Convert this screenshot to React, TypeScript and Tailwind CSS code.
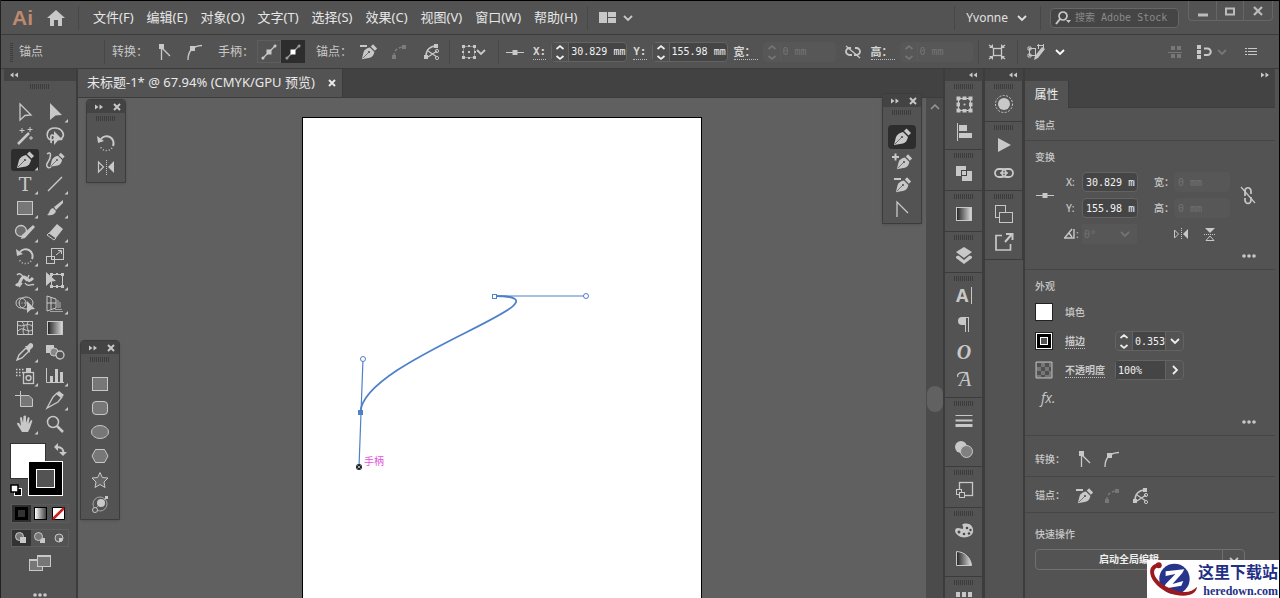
import type { ReactNode } from "react";
import clsx from "clsx";

const UI = "font-['Noto_Sans','Noto_Sans_CJK_SC',sans-serif]";
const MONO = "font-['DejaVu_Sans_Mono','Noto_Sans_CJK_SC',monospace]";

const line = { fill: "none", stroke: "currentColor" } as const;

/* ---------- icon drawings, all centred on 0,0 ---------- */

const nib = (
  <>
    <path d="M-8 8 L-6 0 Q-4 -4 1 -5 L6 0 Q5 5 1 6.500Z" fill="currentColor" />
    <path d="M2 -6 L4.500 -8.500 L9 -4 L6.500 -1.500Z" fill="currentColor" />
    <path d="M-7 7 L-0.500 0.500" stroke="#606060" strokeWidth="0.900" />
    <circle cx="0" cy="0" r="1.100" fill="#484848" />
  </>
);

const rotateArc = (
  <>
    <path d="M-5 -4 A7 7 0 0 1 7 3" {...line} strokeWidth="2" />
    <path d="M-9 -7 L-8 0 L-2 -2Z" fill="currentColor" />
    <path d="M6 5 A7 7 0 0 1 -6 3" {...line} strokeWidth="1.500" strokeDasharray="1 2" />
  </>
);

const icons = {
  direct: <path d="M-5 -8 L6 3 L0 3.500 L-5 8Z" {...line} strokeWidth="1.300" />,
  select: <path d="M-5 -9 L7 3 L0.500 3.500 L-5 8Z" fill="currentColor" />,
  wand: (
    <>
      <path d="M-7 8 L4 -3" {...line} strokeWidth="2.500" />
      <path d="M-3 -8v5 M-5.500 -5.500h5 M5 -9v5 M2.500 -6.500h5 M6 0v4 M4 2h4" {...line} />
    </>
  ),
  lasso: (
    <>
      <path d="M6 3 C11 -1 7 -8 0 -8 C-9 -8 -10 2 -4 4 C0 5 1 -1 -3 -1 C-6 0 -3 4 -4 7" {...line} strokeWidth="1.700" />
      <path d="M-1 -5 L8 4 L3 4.500 L-1 9Z" fill="currentColor" />
    </>
  ),
  pen: nib,
  curvature: (
    <>
      <path d="M-8 -6 C-3 -10 -4 -2 -7 2 C-10 6 -7 9 -4 7" {...line} strokeWidth="1.500" />
      <g transform="translate(2 0) scale(0.85)">{nib}</g>
    </>
  ),
  type: (
    <text x="0" y="7" textAnchor="middle" fill="currentColor" className="font-['DejaVu_Serif',serif] text-[19px] font-medium">
      T
    </text>
  ),
  line: <path d="M-7 7 L7 -7" {...line} strokeWidth="1.500" />,
  rect: <rect x="-7.500" y="-6.500" width="15" height="13" fill="#777" stroke="currentColor" />,
  brush: (
    <>
      <path d="M8 -8 L-1 -1 L1 2 L8 -5Z" fill="currentColor" />
      <path d="M-2 0 L1 3 C0 7 -4 8 -8 7 C-5 5 -6 1 -2 0Z" fill="currentColor" />
    </>
  ),
  shaper: (
    <>
      <circle cx="-4" cy="-1" r="5.500" fill="#6c6c6c" stroke="currentColor" strokeWidth="1.300" />
      <path d="M10 -5 L0 6 L-4 7 L-3 3 L8 -7Z" fill="currentColor" />
    </>
  ),
  eraser: (
    <>
      <path d="M2 -8 L8 -3 L1 6 L-6 1Z" fill="currentColor" />
      <path d="M-6 1 L1 6 L-1 8 L-8 3Z" {...line} />
    </>
  ),
  rotate: rotateArc,
  scale: (
    <>
      <rect x="-3.500" y="-7.500" width="12" height="11" {...line} />
      <rect x="-8.500" y="0.500" width="8" height="7" {...line} />
      <path d="M1 -1 L6 -5 M3 -5.500h3.500v3.500" {...line} />
    </>
  ),
  width: (
    <>
      <path d="M-9 4 C-5 8 -5 -3 -1 -3 C4 -2 2 4 8 -2" {...line} strokeWidth="3" />
      <path d="M-8 -5 C-4 -9 -2 -2 2 1 M-6 7 L-3 3 M0 3 C3 8 7 3 9 5 M4 -5 L2 0" {...line} strokeWidth="1.400" />
    </>
  ),
  free: (
    <>
      <rect x="-3.500" y="-5.500" width="11" height="12" {...line} />
      <path d="M-5 -7h3v3h-3z M6 -7h3v3h-3z M6 5h3v3h-3z M-5 5h3v3h-3z M1 -7h2v2h-2z M1 5h2v3h-2z" fill="currentColor" />
      <path d="M-9 -8 L1 1 L-4 1.500 L-9 6Z" fill="currentColor" />
    </>
  ),
  builder: (
    <>
      <ellipse cx="-4" cy="-1" rx="5" ry="5" {...line} />
      <ellipse cx="1" cy="-1" rx="7" ry="6" {...line} />
      <path d="M-6 -1h8" {...line} strokeDasharray="1 1.500" />
      <path d="M2 -3 L10 5 L6 5.500 L2 9Z" fill="currentColor" />
    </>
  ),
  perspective: (
    <>
      <path d="M-8 -8 L1 -5 V4 L-8 7Z M-4 -7V5 M-8 -1 H1" {...line} />
      <path d="M3 -4v8 M5 -2v6" {...line} opacity=".8" />
      <path d="M-5 7.500h13 M0 5.500h7" {...line} opacity=".7" />
    </>
  ),
  mesh: (
    <>
      <rect x="-7.500" y="-6.500" width="15" height="13" {...line} />
      <path d="M-7 -3 C-2 0 2 -6 7 -2 M-7 3 C-2 -3 2 6 7 2 M-3 -6 C2 -2 -4 2 -1 6 M3 -6 C0 0 5 2 3 6" {...line} />
    </>
  ),
  gradient: <rect x="-7.500" y="-6.500" width="15" height="13" fill="url(#ramp)" stroke="currentColor" />,
  dropper: (
    <>
      <path d="M-8 8 L-6 3 L1 -4 L4 -1 L-3 6Z" {...line} strokeWidth="1.400" />
      <path d="M0 -6 L2 -6 L5 -9 Q9 -9 8 -5 L5 -2 L5 1Z" fill="currentColor" />
    </>
  ),
  blend: (
    <>
      <path d="M-9 -7h8v8h-8z" fill="currentColor" />
      <circle cx="-1" cy="0" r="4" fill="#888" stroke="currentColor" />
      <circle cx="5" cy="3" r="4" fill="#535353" stroke="currentColor" strokeWidth="1.300" />
    </>
  ),
  spray: (
    <>
      <rect x="-1.500" y="-3.500" width="10" height="11" {...line} strokeWidth="1.300" />
      <path d="M1 -8h5v4h-5z" fill="currentColor" />
      <circle cx="3.500" cy="2" r="2.500" {...line} strokeWidth="1.400" />
      <path d="M-9 -6.500h8 M-9 -3.500h7 M-9 -0.500h5" {...line} strokeWidth="1.500" strokeDasharray="1.500 1.500" />
    </>
  ),
  graph: (
    <>
      <path d="M-8.500 -8V6.500H9" {...line} />
      <path d="M-5 0h3v6h-3z M0 -7h3v13h-3z M5 -4h3v10h-3z" fill="currentColor" />
    </>
  ),
  artboard: (
    <>
      <path d="M-10 -4.500h6 M-4.500 -9v7" {...line} />
      <path d="M-4.500 -4.500 H4 L7.500 -1 V6.500 H-4.500Z" fill="#777" stroke="currentColor" />
    </>
  ),
  slice: (
    <>
      <path d="M-8 8 L-2 -3 L2 -7 L7 -3 L3 2Z" {...line} strokeWidth="1.300" />
      <path d="M1 -6 L4 -9 L9 -5 L6 -2Z" fill="currentColor" />
    </>
  ),
  hand: (
    <path
      d="M-3 8 L-8 0 Q-8 -2 -6 -1 L-4 2 L-5 -6 Q-4 -8 -3 -6 L-2 -1 L-1.500 -8 Q0 -9 1 -8 L1 -1 L3 -7 Q5 -7 4.500 -5 L3.500 0 L6 -4 Q8 -4 7 -2 L5 4 L3 8Z"
      fill="currentColor"
    />
  ),
  zoom: (
    <>
      <circle cx="-2" cy="-2" r="5.500" {...line} strokeWidth="1.500" />
      <path d="M2 2 L8 8" {...line} strokeWidth="2.500" />
    </>
  ),
  reflect: (
    <>
      <path d="M-7.500 -5 V5 L-2.500 0Z" {...line} strokeWidth="1.200" />
      <path d="M8 -6 V6 L2 0Z" fill="currentColor" />
      <path d="M0.500 -7V8" {...line} strokeDasharray="1 1" />
    </>
  ),
  reflectSmall: (
    <>
      <path d="M-6.500 -4 V4 L-2.500 0Z" {...line} />
      <path d="M7 -5 V5 L2 0Z" fill="currentColor" />
      <path d="M0.500 -6V6" {...line} strokeDasharray="1 1" />
    </>
  ),
  reflectV: (
    <>
      <path d="M-5 -6H5L0 -1Z" fill="currentColor" />
      <path d="M-4 6.500H4L0 2Z" {...line} />
      <path d="M-6 0.500H6" {...line} strokeDasharray="1 1" />
    </>
  ),
  addPen: (
    <>
      <g transform="translate(2 1) scale(0.9)">{nib}</g>
      <path d="M-10 -4h7 M-6.500 -7.500v7" {...line} strokeWidth="2" />
    </>
  ),
  removePen: (
    <>
      <g transform="translate(1 0) scale(0.9)">{nib}</g>
      <path d="M-8 -6h7" {...line} strokeWidth="2" />
    </>
  ),
  convert: <path d="M-5 8 V-7 L6 4" {...line} strokeWidth="1.300" />,
  shapeRect: <rect x="-7.500" y="-6.500" width="15" height="13" fill="#777" stroke="currentColor" />,
  shapeRound: <rect x="-7.500" y="-6.500" width="15" height="13" rx="3.500" fill="#777" stroke="currentColor" />,
  shapeOval: <ellipse rx="8.500" ry="6.500" fill="#777" stroke="currentColor" />,
  shapeHex: <path d="M-8 0 L-4.500 -6.500 H4.500 L8 0 L4.500 6.500 H-4.500Z" fill="#777" stroke="currentColor" />,
  shapeStar: (
    <path d="M0 -7.500 L2.300 -2.500 L8 -2 L4 2 L5 7.500 L0 4.500 L-5 7.500 L-4 2 L-8 -2 L-2.300 -2.500Z" fill="#666" stroke="currentColor" />
  ),
  flare: (
    <>
      <circle cx="0" cy="0" r="7" {...line} opacity=".7" />
      <circle cx="1" cy="-1" r="4" fill="currentColor" />
      <path d="M-5 5 L7 -7" {...line} opacity=".6" />
      <circle cx="-5" cy="6" r="2.500" fill="#535353" stroke="currentColor" />
      <path d="M5 -8h3v3h-3z" fill="currentColor" />
    </>
  ),
  transform: (
    <>
      <rect x="-5.500" y="-5.500" width="12" height="12" {...line} />
      <path d="M-7.500 -7.500h4v4h-4z M-1.500 -7.500h4v4h-4z M4.500 -7.500h4v4h-4z M-7.500 -1.500h4v4h-4z M4.500 -1.500h4v4h-4z M-7.500 4.500h4v4h-4z M-1.500 4.500h4v4h-4z M4.500 4.500h4v4h-4z" fill="currentColor" />
      <path d="M-4 -4h9v9h-9z" fill="#535353" />
      <circle cx="0.500" cy="0.500" r="1" fill="currentColor" />
    </>
  ),
  align: <path d="M-7 -9h1V9h-1z M-5 -7H3V-1H-5z M-5 1H8V6H-5z" fill="currentColor" />,
  pathfinder: (
    <>
      <path d="M-8 -7H2V3H-8z M-2 -2H8V8H-2z" fill="currentColor" />
      <rect x="-2.500" y="-2.500" width="5" height="5" fill="currentColor" stroke="#454545" />
    </>
  ),
  layers: (
    <>
      <path d="M0 -8 L8 -3 L0 3 L-8 -3Z" fill="currentColor" />
      <path d="M-8 1.500 L-5.500 0.500 L0 5 L5.500 0.500 L8 1.500 V3 L0 9 L-8 3Z" fill="currentColor" />
    </>
  ),
  character: (
    <>
      <text x="-8" y="6" fill="currentColor" className="font-['Open_Sans',sans-serif] text-[18px] font-bold">
        A
      </text>
      <path d="M7.500 -9V8" {...line} />
    </>
  ),
  paragraph: (
    <>
      <path d="M1 -7 H-2 A4 4 0 0 0 -2 1 H1Z" fill="currentColor" />
      <path d="M1.500 -7V8 M4.500 -7V8 M0 -6.500H5" {...line} />
    </>
  ),
  opentype: (
    <text x="0" y="7" textAnchor="middle" fill="currentColor" className="font-['Liberation_Serif',serif] text-[20px] font-bold italic">
      O
    </text>
  ),
  glyphs: (
    <>
      <text x="1" y="6" textAnchor="middle" fill="currentColor" className="font-['Liberation_Serif',serif] text-[20px] italic">
        A
      </text>
      <path d="M3 -7 C-3 -9 -8 -6 -6 -3" {...line} strokeWidth="1.200" />
    </>
  ),
  stroke: <path d="M-8.500 -6H8.500V-5H-8.500z M-8.500 -1.500H8.500V0.500H-8.500z M-8.500 3H8.500V6H-8.500z" fill="currentColor" />,
  transparency: (
    <>
      <circle cx="-3" cy="-2" r="6" fill="currentColor" />
      <circle cx="2.500" cy="2.500" r="6" fill="#808080" stroke="currentColor" />
    </>
  ),
  symbols: (
    <>
      <rect x="-4.500" y="-7.500" width="13" height="13" {...line} strokeWidth="1.300" />
      <rect x="-7.500" y="-0.500" width="5" height="5" fill="#535353" stroke="currentColor" />
      <rect x="-4.500" y="2.500" width="5" height="5" fill="#535353" stroke="currentColor" />
    </>
  ),
  palette: (
    <>
      <path d="M-1 -7 C7 -9 10 -3 9 1 C8 6 0 8 -5 5 C-10 2 -10 -3 -6 -3 C-3 -3 -1 -1 -1 -3 C0 -5 -3 -6 -1 -7Z" fill="currentColor" />
      <g fill="#484848">
        <circle cx="3" cy="-3" r="1.300" />
        <circle cx="6.500" cy="-1" r="1.200" />
        <circle cx="5" cy="2.500" r="1.300" />
        <circle cx="0" cy="3" r="1.300" />
        <circle cx="-5" cy="1" r="1.500" />
      </g>
    </>
  ),
  guide: <path d="M-7.500 -7.500 C2 -7 7 0 7.500 6.500 H-7.500Z" fill="url(#ramp)" stroke="currentColor" />,
  swatches: <path d="M-8 -8h4v5h-4z M-2 -8h4v5h-4z M4 -8h4v5h-4z M-8 -1h4v4h-4z M-2 -1h4v4h-4z M4 -1h4v4h-4z" fill="currentColor" />,
  appearance: (
    <>
      <circle r="6" fill="currentColor" />
      <circle r="8.500" {...line} strokeDasharray="2 1.500" />
    </>
  ),
  play: <path d="M-6 -7 L7 0 L-6 7Z" fill="currentColor" />,
  links: (
    <>
      <rect x="-9" y="-4" width="11" height="8" rx="4" {...line} strokeWidth="1.800" />
      <rect x="-2" y="-4" width="11" height="8" rx="4" {...line} strokeWidth="1.800" />
      <path d="M-4 0h8" {...line} strokeWidth="1.500" />
    </>
  ),
  assets: (
    <>
      <rect x="-8.500" y="-8.500" width="10" height="12" {...line} />
      <rect x="-4.500" y="-1.500" width="13" height="10" fill="#535353" stroke="currentColor" />
    </>
  ),
  share: (
    <>
      <path d="M-2 -6.500 H-8 V8 H6.500 V2" {...line} strokeWidth="1.700" />
      <path d="M1 0 L8 -8 M2 -8H8.500V-2" {...line} strokeWidth="2" />
    </>
  ),
  corner: (
    <>
      <path d="M-2.500 -4 V8 M-2 -4 L6 4" {...line} strokeWidth="1.300" />
      <path d="M-5 -8h5v5h-5z" fill="currentColor" />
    </>
  ),
  smooth: (
    <>
      <path d="M-7 8 C-7 0 -3 -6 7 -6.500" {...line} strokeWidth="1.300" />
      <path d="M-5 -6h5v5h-5z" fill="currentColor" />
    </>
  ),
  handles: (
    <>
      <path d="M-7 7 L7 -7" {...line} strokeWidth="1.200" />
      <path d="M-2.500 -2.500h5v5h-5z" fill="currentColor" />
      <circle cx="-6" cy="6" r="1.500" fill="currentColor" />
      <circle cx="6" cy="-6" r="1.500" fill="currentColor" />
    </>
  ),
  handlesOn: (
    <>
      <path d="M-7 7 L7 -7" fill="none" stroke="#9a9a9a" strokeWidth="1.200" />
      <circle cx="-6" cy="6" r="1.500" fill="#9a9a9a" />
      <circle cx="6" cy="-6" r="1.500" fill="#9a9a9a" />
      <path d="M-2.500 -2.500h5v5h-5z" fill="#fff" />
    </>
  ),
  connect: (
    <>
      <path d="M-5 4 C-5 -2 -1 -5 5 -5" {...line} strokeWidth="1.500" strokeDasharray="3 2" />
      <path d="M-7 3h4v4h-4z M3 -7h4v4h-4z" fill="currentColor" />
    </>
  ),
  cut: (
    <>
      <path d="M-5 4 C-5 -2 -1 -6 5 -6" {...line} strokeWidth="1.500" />
      <path d="M-7 3h4v4h-4z M3 -8h4v4h-4z" fill="currentColor" />
      <path d="M-3 -1 L6 5 M-3 5 L6 -1" {...line} strokeWidth="1.300" />
      <circle cx="6" cy="-1" r="1.600" {...line} />
      <circle cx="6" cy="6" r="1.600" {...line} />
    </>
  ),
  bounds: (
    <>
      <rect x="-5.500" y="-5.500" width="11" height="11" {...line} strokeDasharray="1 1" />
      <path d="M-7 -7h3v3h-3z M-1 -7h2v2h-2z M4 -7h3v3h-3z M-7 -1h2v2h-2z M5 -1h2v2h-2z M-7 4h3v3h-3z M-1 5h2v2h-2z M4 4h3v3h-3z M-1 -1h2v2h-2z" fill="currentColor" />
    </>
  ),
  anchorRef: (
    <>
      <path d="M-9 0.500H9" {...line} />
      <path d="M-2.500 -2h5v5h-5z" fill="currentColor" />
    </>
  ),
  unlink: (
    <>
      <path d="M-2 -4 H-3.500 A3.500 3.500 0 0 0 -3.500 3 H-1 M2 -4 H3.500 A3.500 3.500 0 0 1 3.500 3 H1" {...line} strokeWidth="1.800" />
      <path d="M-7 -6 L7 6" {...line} strokeWidth="1.300" />
    </>
  ),
  unlinkV: (
    <>
      <path d="M-3 1 V-3.500 A3 3.500 0 0 1 3 -4 V-1 M-3 3 V5 A3 3.500 0 0 0 3 5 V2" {...line} strokeWidth="1.700" />
      <path d="M-7 -8 L7 8" {...line} strokeWidth="1.200" />
    </>
  ),
  isolate: (
    <>
      <rect x="-3.500" y="-3.500" width="8" height="7" {...line} strokeWidth="1.300" />
      <path d="M-8 -7 L-4 -4 M8 -7 L4 -4 M-8 7 L-4 4 M8 7 L4 4" {...line} strokeWidth="1.500" />
      <path d="M-4 -8V-4H-8z M4 -8V-4H8z M-4 8V4H-8z M4 8V4H8z" fill="currentColor" />
    </>
  ),
  similar: (
    <>
      <rect x="-6.500" y="-3.500" width="6" height="7" {...line} />
      <path d="M-8 -5h3v3h-3z M-8 2h3v3h-3z" {...line} />
      <path d="M1 -6.500h7 M2.500 -8v5 M7.500 -8v4" {...line} />
      <path d="M9 -3 L2 6 L-2 8 L-1 4 L6 -5Z" fill="currentColor" />
    </>
  ),
  pixelGrid: <path d="M-5 -6h4v4h-4z M1 -6h4v4h-4z M-5 2h4v4h-4z M1 2h4v4h-4z M-8 0h14v1H-8z" fill="currentColor" />,
  snap: (
    <>
      <path d="M-7 -7h4v4h-4z M-7 -2h4v4h-4z M-7 3h4v4h-4z" fill="currentColor" />
      <path d="M0 -3.500H3.500A3 3 0 0 1 3.500 3H0" {...line} strokeWidth="2" />
    </>
  ),
  list: <path d="M-6 -3.500h2 M-3 -3.500h9 M-6 -0.500h2 M-3 -0.500h9 M-6 2.500h2 M-3 2.500h9" {...line} />,
  home: <path d="M0 -8 L9 0 H6 V8 H2 V2 H-2 V8 H-6 V0 H-9Z" fill="currentColor" />,
  workspace: <path d="M-9 -6h8v11h-8z M0 -6h8v5h-8z M0 0h8v5h-8z" fill="currentColor" />,
  search: (
    <>
      <circle cx="0" cy="-2" r="4" {...line} strokeWidth="1.700" />
      <path d="M-3 1 L-7 6" {...line} strokeWidth="2" />
      <path d="M3 2h5l-2.500 3z" fill="currentColor" />
    </>
  ),
  angle: <path d="M-5 3.500 L2 -5 M-6 4H4V-5 M-1 -1 L2 3" {...line} strokeWidth="1.400" />,
  swap: (
    <>
      <path d="M-3 -3 C2 -3 4 0 3 3" {...line} strokeWidth="1.800" />
      <path d="M-6 -3 L-2 -7 V1Z M3 6 L-1 2 H7Z" fill="currentColor" />
    </>
  ),
  defaults: (
    <>
      <rect x="-1.500" y="-1.500" width="7" height="7" fill="#000" stroke="#fff" />
      <rect x="-5" y="-5" width="7" height="7" fill="#fff" stroke="#000" strokeWidth="1.500" />
    </>
  ),
  drawNormal: (
    <>
      <circle cx="-1.500" cy="-1.500" r="4" fill="#777" stroke="currentColor" />
      <path d="M-1 -1h6v6h-6z" fill="currentColor" />
    </>
  ),
  drawBehind: (
    <>
      <path d="M0 0h5v5h-5z" fill="currentColor" />
      <circle cx="-1.500" cy="-1.500" r="4" fill="#777" stroke="currentColor" />
    </>
  ),
  drawInside: (
    <>
      <circle r="4" fill="#666" stroke="currentColor" />
      <path d="M0 0h4a4 4 0 0 1 -4 4z" fill="currentColor" />
    </>
  ),
  screen: (
    <>
      <rect x="-10.500" y="-3.500" width="13" height="11" fill="#777" stroke="currentColor" />
      <rect x="-2.500" y="-7.500" width="13" height="11" fill="#777" stroke="currentColor" />
      <path d="M-11 -4h8v2h-8z M-3 -8h14v2h-14z" fill="currentColor" />
    </>
  ),
  down: <path d="M-4 -2 L0 2 L4 -2" {...line} strokeWidth="1.800" />,
  right: <path d="M-2 -4 L2 0 L-2 4" {...line} strokeWidth="1.800" />,
  up: <path d="M-4 2 L0 -2 L4 2" {...line} strokeWidth="1.500" />,
  steps: <path d="M-3.500 -3 L0 -6 L3.500 -3 M-3.500 4 L0 7 L3.500 4" {...line} strokeWidth="1.700" />,
  close: <path d="M-3 -3 L3 3 M3 -3 L-3 3" {...line} strokeWidth="2" />,
  minimize: <path d="M-5 2.500h10v3h-10z" fill="currentColor" />,
  maximize: <rect x="-4" y="-2.500" width="8" height="6" {...line} strokeWidth="2" />,
  closeWin: <path d="M-4 -4 L4 4 M4 -4 L-4 4" {...line} strokeWidth="2.200" />,
  collapse: <path d="M-0.500 -2.500v5l-3.500 -2.500z M4 -2.500v5l-3.500 -2.500z" fill="currentColor" />,
  expand: <path d="M-4 -2.500v5l3.500 -2.500z M0.500 -2.500v5l3.500 -2.500z" fill="currentColor" />,
  dots: (
    <>
      <circle cx="-5" r="1.800" fill="currentColor" />
      <circle r="1.800" fill="currentColor" />
      <circle cx="5" r="1.800" fill="currentColor" />
    </>
  ),
};

type IconName = keyof typeof icons;

function Icon({ name, more }: { name: IconName; more?: boolean }) {
  return (
    <svg viewBox="-12 -12 24 24" className="size-6 shrink-0 overflow-visible" aria-hidden="true">
      {icons[name]}
      {more && <path d="M13 7v3.500h-3.500z" fill="currentColor" />}
    </svg>
  );
}

function IconButton({ name, more, className }: { name: IconName; more?: boolean; className?: string }) {
  return (
    <button type="button" aria-label={name} className={clsx("flex shrink-0 items-center justify-center", className)}>
      <Icon name={name} more={more} />
    </button>
  );
}

function Grip() {
  return <div className="h-[5px] w-5 bg-[repeating-linear-gradient(90deg,#3c3c3c_0_1px,transparent_1px_2px)]" />;
}

function Divider({ className }: { className?: string }) {
  return <div className={clsx("h-6 w-px shrink-0 bg-[#474747]", className)} />;
}

/* ---------- menu bar ---------- */

const menus = ["文件(F)", "编辑(E)", "对象(O)", "文字(T)", "选择(S)", "效果(C)", "视图(V)", "窗口(W)", "帮助(H)"];

function MenuBar() {
  return (
    <header className="flex h-[35px] shrink-0 items-center border-t border-b border-t-black border-b-[#3c3c3c] pl-[11px]">
      <span className="w-8 font-['Liberation_Sans',sans-serif] text-[21px] leading-none font-bold text-[#bd8a6e]">Ai</span>
      <IconButton name="home" />
      <Divider className="ml-[10px]" />
      <nav className="ml-[14px] flex gap-[13px] text-[13px] whitespace-nowrap text-[#e6e6e6]">
        {menus.map((m) => (
          <button key={m} type="button">{m}</button>
        ))}
      </nav>
      <Divider className="ml-[10px]" />
      <IconButton name="workspace" className="ml-2" />
      <IconButton name="down" className="-ml-1" />
      <div className="flex-1" />
      <Divider />
      <button type="button" className="ml-[11px] flex items-center gap-[2px] text-xs text-[#e0e0e0]">
        Yvonne
        <Icon name="down" />
      </button>
      <Divider className="ml-[6px]" />
      <label className="ml-[9px] flex h-5 w-[129px] items-center rounded-sm border border-[#666] bg-[#454545]">
        <Icon name="search" />
        <input aria-label="搜索" placeholder="搜索 Adobe Stock" className={clsx("w-full min-w-0 bg-transparent text-[10px] outline-none placeholder:text-[#8a8a8a]", MONO)} />
      </label>
      <div className="mr-[6px] ml-[9px] flex h-5 self-start rounded-b border border-t-0 border-[#666] text-[#bbb]">
        <IconButton name="minimize" className="w-[27px]" />
        <IconButton name="maximize" className="w-7 border-x border-[#666]" />
        <IconButton name="closeWin" className="w-7" />
      </div>
    </header>
  );
}

/* ---------- control bar ---------- */

function Stepper({ label, value, disabled }: { label: string; value: string; disabled?: boolean }) {
  return (
    <div className="ml-[6px] flex items-center">
      <label htmlFor={`bar-${label}`} className={clsx("border-b border-dotted border-[#bbb] text-[11px] leading-[15px] font-bold whitespace-nowrap text-[#d6d6d6]", label < "a" ? MONO : "w-6")}>
        {label < "a" ? `${label}:` : `${label}：`}
      </label>
      <div className={clsx("ml-[5px] flex h-5 items-center rounded-sm border", disabled ? "w-[73px] border-[#575757] bg-[#575757] text-[#757575]" : "w-[76px] border-[#636363] bg-[#454545] text-[#f2f2f2]")}>
        <button type="button" aria-label={`${label} ±`} disabled={disabled} className={clsx("flex h-full w-[17px] shrink-0 items-center justify-center border-r", disabled ? "border-[#5c5c5c]" : "border-[#636363] bg-[#4f4f4f]")}>
          <Icon name="steps" />
        </button>
        <input id={`bar-${label}`} defaultValue={value} disabled={disabled} className={clsx("w-full min-w-0 bg-transparent pl-[2px] text-[10px] outline-none", MONO)} />
      </div>
    </div>
  );
}

function ControlBar() {
  return (
    <div className="flex h-[34px] shrink-0 items-center border-b border-[#3c3c3c] pl-[9px] text-xs whitespace-nowrap">
      <div className="h-5 w-[3px] bg-[repeating-linear-gradient(0deg,#3c3c3c_0_1px,transparent_1px_2px)]" />
      <span className="ml-[6px] w-[85px]">锚点</span>
      <Divider />
      <span className="ml-[7px] w-10">转换：</span>
      <IconButton name="corner" />
      <IconButton name="smooth" className="ml-[7px]" />
      <span className="ml-[11px] w-[39px]">手柄：</span>
      <IconButton name="handles" className="h-[23px] w-6 border border-[#5e5e5e]" />
      <IconButton name="handlesOn" className="h-[23px] w-6 bg-[#2d2d2d]" />
      <span className="ml-[11px] w-10">锚点：</span>
      <IconButton name="removePen" />
      <IconButton name="connect" className="ml-[7px] text-[#7c7c7c]" />
      <IconButton name="cut" className="ml-2" />
      <Divider className="ml-[6px]" />
      <IconButton name="bounds" className="ml-[7px]" />
      <IconButton name="down" className="-ml-3" />
      <Divider className="ml-[5px]" />
      <IconButton name="anchorRef" className="ml-1" />
      <Stepper label="X" value="30.829 mm" />
      <Stepper label="Y" value="155.98 mm" />
      <Stepper label="宽" value="0 mm" disabled />
      <IconButton name="unlink" className="ml-[5px]" />
      <Stepper label="高" value="0 mm" disabled />
      <Divider className="ml-[5px]" />
      <IconButton name="isolate" className="ml-[6px]" />
      <Divider className="ml-2" />
      <IconButton name="similar" className="ml-[6px]" />
      <IconButton name="down" className="text-white" />
      <div className="flex-1" />
      <IconButton name="pixelGrid" className="text-[#777]" />
      <IconButton name="snap" className="ml-1" />
      <IconButton name="down" className="-ml-[6px] text-[#777]" />
      <IconButton name="list" className="mr-4 ml-[5px]" />
    </div>
  );
}

/* ---------- left toolbar ---------- */

const tools: [IconName, boolean][] = [
  ["direct", false], ["select", true],
  ["wand", false], ["lasso", false],
  ["pen", true], ["curvature", false],
  ["type", true], ["line", true],
  ["rect", true], ["brush", true],
  ["shaper", true], ["eraser", true],
  ["rotate", true], ["scale", true],
  ["width", true], ["free", true],
  ["builder", true], ["perspective", true],
  ["mesh", false], ["gradient", false],
  ["dropper", true], ["blend", false],
  ["spray", true], ["graph", true],
  ["artboard", false], ["slice", true],
  ["hand", true], ["zoom", false],
];

function Toolbar() {
  return (
    <aside className="flex w-[74px] shrink-0 flex-col border-r-2 border-[#3c3c3c]">
      <div className="flex h-3 shrink-0 items-center bg-[#434343]">
        <IconButton name="collapse" className="h-3 w-5" />
      </div>
      <div className="mt-[3px] flex shrink-0 justify-center pb-[11px]"><Grip /></div>
      <div className="grid shrink-0 grid-cols-2 px-[6px]">
        {tools.map(([name, more]) => (
          <IconButton key={name} name={name} more={more} className={clsx("h-6", name === "pen" && "rounded-sm bg-[#2d2d2d] bg-clip-content px-px py-px")} />
        ))}
      </div>
      <div className="relative mx-[6px] mt-[7px] h-[54px] shrink-0">
        <button type="button" aria-label="填色" className="absolute top-0 left-0 size-9 border border-[#333] bg-white" />
        <button type="button" aria-label="描边" className="absolute top-[18px] left-[18px] flex size-[35px] items-center justify-center border border-white bg-black">
          <span className="size-[19px] border border-white bg-[#535353]" />
        </button>
        <IconButton name="swap" className="absolute -top-[5px] left-[38px]" />
        <IconButton name="defaults" className="absolute top-[35px] -left-[6px]" />
      </div>
      <div className="mx-[7px] mt-[7px] flex h-[19px] shrink-0 items-center border border-[#5b5b5b]">
        <button type="button" aria-label="颜色" className="flex h-full flex-1 items-center justify-center bg-[#2d2d2d]">
          <span className="size-[13px] border-[3px] border-black bg-[#333]" />
        </button>
        <button type="button" aria-label="渐变" className="flex h-full flex-1 items-center justify-center">
          <span className="size-[13px] border border-black bg-linear-to-r from-white to-[#444]" />
        </button>
        <button type="button" aria-label="无" className="flex h-full flex-1 items-center justify-center">
          <svg viewBox="0 0 13 13" className="size-[13px]">
            <path d="M.5 .5h12v12h-12z" fill="#fff" stroke="#000" />
            <path d="M1 12 L12 1" stroke="#c8201c" strokeWidth="2.500" />
          </svg>
        </button>
      </div>
      <div className="mx-[7px] mt-[6px] grid h-[18px] shrink-0 grid-cols-3 border border-[#5e5e5e]">
        <IconButton name="drawNormal" className="h-4 w-full min-w-0 bg-[#333]" />
        <IconButton name="drawBehind" className="h-4 w-full min-w-0" />
        <IconButton name="drawInside" className="h-4 w-full min-w-0" />
      </div>
      <IconButton name="screen" className="mt-1" />
      <IconButton name="dots" className="mt-2" />
    </aside>
  );
}

/* ---------- floating tool panels ---------- */

function FloatingPanel({ children, className }: { children: ReactNode; className?: string }) {
  return (
    <div className={clsx("absolute flex w-10 flex-col items-center rounded-t border border-[#3c3c3c] bg-[#535353] shadow", className)}>
      <div className="flex h-[13px] w-full shrink-0 items-center justify-between rounded-t bg-[#434343] pr-[3px]">
        <IconButton name="expand" className="h-3 w-6" />
        <IconButton name="close" className="h-3 w-3" />
      </div>
      <div className="mt-[3px] mb-[10px]"><Grip /></div>
      {children}
    </div>
  );
}

function Artboard() {
  return (
    <div className="mt-[19px] h-full w-[400px] border border-black bg-white">
      <svg viewBox="0 0 398 480" className="h-[480px] w-full text-[#4f80c9]">
        <path d="M191 178 C283 178 60 241 57.500 294" {...line} strokeWidth="1.800" />
        <path d="M191 178 H283 M60 241 L56 349" {...line} strokeWidth="1.200" />
        <rect x="189.500" y="176.500" width="4" height="4" fill="#fff" stroke="currentColor" />
        <circle cx="283" cy="178" r="2.500" fill="#fff" stroke="currentColor" />
        <circle cx="60" cy="241" r="2.500" fill="#fff" stroke="currentColor" />
        <path d="M55 292h5v5h-5z" fill="currentColor" />
        <circle cx="56" cy="349" r="3" fill="#222" />
        <path d="M54.500 347.500l3 3m0 -3l-3 3" stroke="#9ab" />
        <text x="61" y="347" fill="#e24fe0" className="text-[10px]">手柄</text>
      </svg>
    </div>
  );
}

function Workspace() {
  return (
    <main className="relative flex min-w-0 flex-1 flex-col">
      <div className="flex h-[29px] shrink-0 border-b border-[#3c3c3c] bg-[#424242]">
        <div className="flex w-[265px] items-center justify-between border-r border-[#3c3c3c] bg-[#535353] pr-[3px] pl-[9px] text-[13px] whitespace-nowrap text-[#e8e8e8]">
          未标题-1* @ 67.94% (CMYK/GPU 预览)
          <IconButton name="close" className="h-5 w-[14px]" />
        </div>
      </div>
      <div className="flex min-h-0 flex-1">
        <div className="flex min-w-0 flex-1 justify-center overflow-hidden bg-[#606060]">
          <Artboard />
        </div>
        <div className="flex w-[17px] shrink-0 flex-col items-center bg-[#4b4b4b]">
          <IconButton name="up" className="h-[18px] text-[#999]" />
          <div className="mt-[270px] h-[26px] w-4 rounded-full bg-[#616161]" />
        </div>
      </div>

      <FloatingPanel className="top-[30px] left-2 h-[84px]">
        <IconButton name="rotate" />
        <IconButton name="reflect" />
      </FloatingPanel>
      <FloatingPanel className="top-[271px] left-[2px] h-[180px]">
        <IconButton name="shapeRect" />
        <IconButton name="shapeRound" />
        <IconButton name="shapeOval" />
        <IconButton name="shapeHex" />
        <IconButton name="shapeStar" />
        <IconButton name="flare" />
      </FloatingPanel>
      <FloatingPanel className="top-6 right-[21px] h-[131px]">
        <IconButton name="pen" className="h-6 w-7 rounded-sm bg-[#2d2d2d]" />
        <IconButton name="addPen" />
        <IconButton name="removePen" />
        <IconButton name="convert" />
      </FloatingPanel>
    </main>
  );
}

/* ---------- icon docks ---------- */

function Dock({ groups }: { groups: IconName[][] }) {
  return (
    <div className="flex w-10 shrink-0 flex-col overflow-hidden border-l-2 border-[#3c3c3c]">
      <div className="flex h-3 shrink-0 items-center justify-end bg-[#434343]">
        <IconButton name="collapse" className="h-3 w-5" />
      </div>
      {groups.map((group) => (
        <div key={group[0]} className="flex shrink-0 flex-col items-center border-r border-b border-[#3c3c3c] pt-[3px] pb-[3px]">
          <Grip />
          <div className="mt-px flex flex-col">
            {group.map((name) => (
              <IconButton key={name} name={name} className="h-7 w-9" />
            ))}
          </div>
        </div>
      ))}
    </div>
  );
}

/* ---------- properties panel ---------- */

function Section({ title, children, className }: { title: string; children?: ReactNode; className?: string }) {
  return (
    <section className={clsx("shrink-0 border-b border-[#464646] px-[10px]", className)}>
      <h2 className="text-[10px] leading-4 font-medium">{title}</h2>
      {children}
    </section>
  );
}

function Field({ label, value, disabled }: { label: string; value: string; disabled?: boolean }) {
  return (
    <div className="flex h-5 items-center">
      <label htmlFor={`prop-${label}`} className={clsx("w-5 text-[10px] font-medium whitespace-nowrap", label < "a" && "pl-1")}>
        {label < "a" ? `${label}:` : `${label}：`}
      </label>
      <input
        id={`prop-${label}`}
        defaultValue={value}
        disabled={disabled}
        className={clsx("h-5 w-14 rounded-sm border pr-[2px] pl-[3px] text-[10px] outline-none", MONO, disabled ? "border-[#575757] bg-[#575757] text-[#737373]" : "border-[#636363] bg-[#454545] text-[#f2f2f2]")}
      />
    </div>
  );
}

function Properties() {
  return (
    <aside className="flex w-[252px] shrink-0 flex-col overflow-hidden border-l-2 border-[#3c3c3c]">
      <div className="flex h-3 shrink-0 items-center justify-end bg-[#434343]">
        <IconButton name="expand" className="h-3 w-5" />
      </div>
      <div className="flex h-[27px] shrink-0 bg-[#434343]">
        <button type="button" className="w-11 border-r border-[#3c3c3c] bg-[#535353] text-xs text-[#efefef]">属性</button>
        <div className="flex-1 border-b border-[#3c3c3c]" />
      </div>

      <Section title="锚点" className="h-[33px] pt-[9px]" />

      <Section title="变换" className="h-[129px] pt-2">
        <div className="mt-[7px] flex items-center">
          <IconButton name="anchorRef" className="-ml-[2px]" />
          <div className="ml-[5px] flex flex-col gap-[6px]">
            <Field label="X" value="30.829 mm" />
            <Field label="Y" value="155.98 mm" />
          </div>
          <div className="ml-4 flex flex-col gap-[6px]">
            <Field label="宽" value="0 mm" disabled />
            <Field label="高" value="0 mm" disabled />
          </div>
          <IconButton name="unlinkV" className="ml-[6px]" />
        </div>
        <div className="mt-1 flex items-center">
          <div className="ml-[23px] flex w-6 items-center">
            <Icon name="angle" />
            <span className="-ml-[6px] text-[10px]">:</span>
          </div>
          <div className="flex h-5 w-[55px] items-center justify-between bg-[#575757] text-[#737373]">
            <input aria-label="旋转" defaultValue="0°" disabled className={clsx("w-6 bg-transparent pl-[2px] text-[10px]", MONO)} />
            <Icon name="down" />
          </div>
          <IconButton name="reflectSmall" className="ml-8" />
          <IconButton name="reflectV" className="ml-[5px]" />
        </div>
        <div className="-mt-[2px] flex justify-end pr-1">
          <IconButton name="dots" />
        </div>
      </Section>

      <Section title="外观" className="h-[166px] pt-2">
        <div className="mt-2 flex h-5 items-center">
          <button type="button" aria-label="填色" className="size-[18px] border border-[#222] bg-white" />
          <span className="ml-3 text-[10px] font-medium">填色</span>
        </div>
        <div className="mt-[9px] flex h-5 items-center">
          <button type="button" aria-label="描边" className="flex size-[18px] items-center justify-center border border-[#222] bg-white p-px">
            <span className="flex size-full items-center justify-center bg-black">
              <span className="size-2 border border-white bg-[#535353]" />
            </span>
          </button>
          <label htmlFor="stroke" className="ml-3 w-[50px] text-[10px] leading-[13px] font-bold">
            <span className="border-b border-dotted border-[#bbb]">描边</span>
          </label>
          <div className="flex h-5 w-[69px] items-center rounded-sm border border-[#636363]">
            <IconButton name="steps" className="h-full w-[17px] border-r border-[#636363] text-[#eee]" />
            <input id="stroke" defaultValue="0.353" className={clsx("h-full w-8 bg-[#454545] pl-[2px] text-[10px] text-[#f2f2f2] outline-none", MONO)} />
            <IconButton name="down" className="h-full w-[18px] border-l border-[#636363] text-[#eee]" />
          </div>
        </div>
        <div className="mt-[9px] flex h-5 items-center">
          <svg viewBox="0 0 18 18" className="size-[18px]">
            <path d="M1 1h16v16h-16z" fill="#777" stroke="#bbb" />
            <path d="M2 2h4v4h-4z M10 2h4v4h-4z M6 6h4v4h-4z M14 6h2v4h-2z M2 10h4v4h-4z M10 10h4v4h-4z M6 14h4v2h-4z" fill="#505050" />
          </svg>
          <label htmlFor="opacity" className="ml-3 w-[50px] text-[10px] leading-[13px] font-bold whitespace-nowrap">
            <span className="border-b border-dotted border-[#bbb]">不透明度</span>
          </label>
          <div className="flex h-5 w-[69px] items-center rounded-sm border border-[#636363]">
            <input id="opacity" defaultValue="100%" className={clsx("h-full w-[49px] bg-[#454545] pl-[2px] text-[10px] text-[#f2f2f2] outline-none", MONO)} />
            <IconButton name="right" className="h-full w-[18px] border-l border-[#636363] text-[#eee]" />
          </div>
        </div>
        <button type="button" className="mt-2 ml-[6px] block font-['Open_Sans',sans-serif] text-sm leading-5 italic">fx.</button>
        <div className="mt-[2px] flex justify-end pr-1">
          <IconButton name="dots" />
        </div>
      </Section>

      <section className="flex h-[41px] shrink-0 items-center border-b border-[#464646] px-[10px] pt-[6px]">
        <span className="w-[37px] text-[10px] font-medium">转换：</span>
        <IconButton name="corner" />
        <IconButton name="smooth" className="ml-1" />
      </section>
      <section className="flex h-9 shrink-0 items-center border-b border-[#464646] px-[10px] pt-[2px]">
        <span className="w-[37px] text-[10px] font-medium">锚点：</span>
        <IconButton name="removePen" />
        <IconButton name="connect" className="ml-1 text-[#777]" />
        <IconButton name="cut" className="ml-1" />
      </section>

      <section className="px-[10px] pt-[13px]">
        <h2 className="text-[10px] leading-4 font-medium">快速操作</h2>
        <div className="mt-[7px] flex h-[21px] w-[210px] rounded-sm border border-[#707070]">
          <button type="button" className="flex-1 text-[10px] font-bold text-[#eee]">启动全局编辑</button>
          <IconButton name="down" className="w-[22px] border-l border-[#707070]" />
        </div>
      </section>
    </aside>
  );
}

/* ---------- download site badge over the corner ---------- */

function SiteBadge() {
  return (
    <a href="#heredown" className="absolute right-0 bottom-0 flex h-[38px] w-[132px] items-center bg-white">
      <svg viewBox="0 0 52 38" className="h-[38px] w-[51px] shrink-0">
        <circle cx="28" cy="19" r="15.500" fill="#27348b" />
        <path d="M19 11 L38 9 L36 13 L26 24 L37 21 L35 26 L17 29 L19 24 L29 14 L19 16Z" fill="#fff" />
        <path d="M11 3 C-3 6 3 24 20 32 C33 38 50 38 51 27 C45 34 34 34 22 28 C8 21 3 10 11 7Z" fill="#9c1a1d" />
        <circle cx="12" cy="5" r="3" fill="#9c1a1d" />
      </svg>
      <span className="flex flex-col items-end whitespace-nowrap text-[#1f2f86]">
        <span className="text-base leading-[23px] font-bold">这里下载站</span>
        <span className="font-['Liberation_Serif',serif] text-xs leading-[14px] font-bold">heredown.com</span>
      </span>
    </a>
  );
}

export default function App() {
  return (
    <div className={clsx("relative flex h-screen flex-col overflow-hidden border-x border-l-[#222] border-r-black bg-[#535353] text-[#c8c8c8]", UI)}>
      <svg className="absolute size-0" aria-hidden="true">
        <linearGradient id="ramp">
          <stop offset="0" stopColor="#222" />
          <stop offset="1" stopColor="#ddd" />
        </linearGradient>
      </svg>
      <MenuBar />
      <ControlBar />
      <div className="flex min-h-0 flex-1 pr-1 pl-[3px]">
        <Toolbar />
        <Workspace />
        <Dock
          groups={[
            ["transform", "align"],
            ["pathfinder"],
            ["gradient"],
            ["layers"],
            ["character", "paragraph", "opentype", "glyphs"],
            ["stroke", "transparency"],
            ["symbols"],
            ["palette", "guide"],
            ["swatches"],
          ]}
        />
        <Dock groups={[["appearance"], ["play", "links"], ["assets", "share"]]} />
        <Properties />
      </div>
      <SiteBadge />
    </div>
  );
}
